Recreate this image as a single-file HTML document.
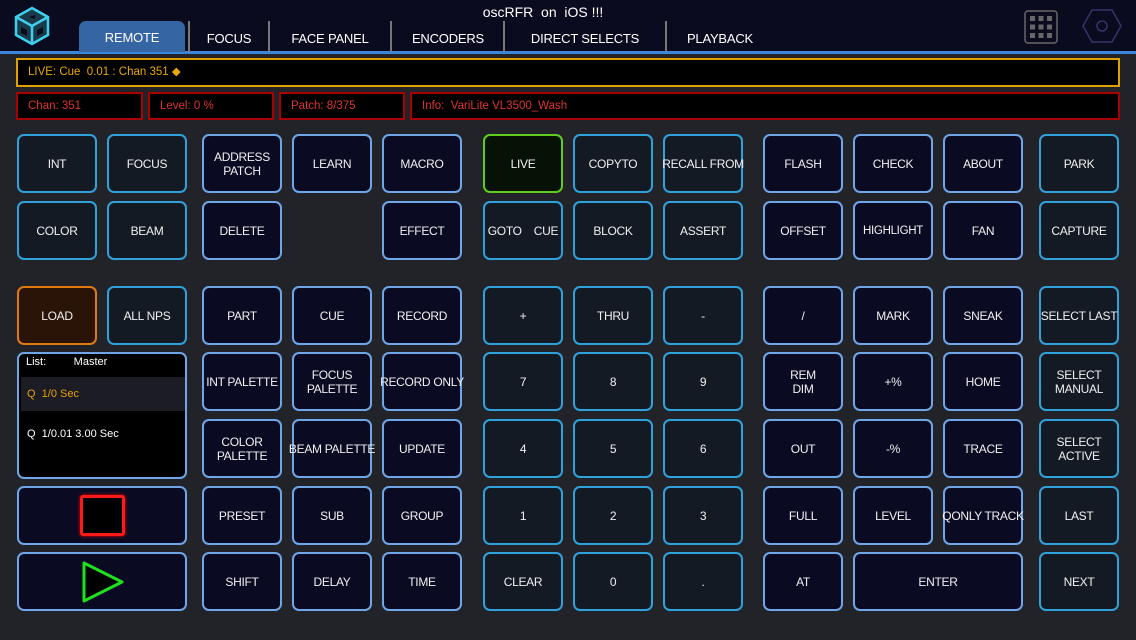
<!DOCTYPE html>
<html><head><meta charset="utf-8"><style>
*{margin:0;padding:0;box-sizing:border-box}
body{width:1136px;height:640px;background:#222229;font-family:"Liberation Sans",sans-serif;position:relative;overflow:hidden;color:#fff}
.top{position:absolute;left:0;top:0;width:1136px;height:52px;background:#0b0b20}
.line{position:absolute;left:0;top:51px;width:1136px;height:3px;background:#3a86d8}
.title{position:absolute;left:0;width:1086px;top:4px;text-align:center;font-size:14px;color:#fff}
.tab{position:absolute;top:22px;height:30px;line-height:34px;font-size:13px;letter-spacing:-0.2px;text-align:center;color:#fff}
.div{position:absolute;top:21px;width:2px;height:31px;background:#777}
.b{position:absolute;width:80px;height:59px;border-radius:7px;border:2px solid #6ea6e8;background:#0a0b22;display:flex;align-items:center;justify-content:center;text-align:center;font-size:12px;line-height:14px;color:#f0f0f0;white-space:nowrap;letter-spacing:-0.3px}
.t{border-color:#2fa2dc;background:#141a24}
.box{position:absolute;height:28px;border:2px solid #a00;background:#000;color:#d33;font-size:11.5px;line-height:24px;padding-left:10px}
</style></head><body>
<div class="top"></div>
<div class="line"></div>
<svg style="position:absolute;left:13px;top:6px" width="38" height="40" viewBox="0 0 38 40">
<polygon points="19,2 35,11 35,29 19,38 3,29 3,11" fill="#1a3a4a" stroke="#3fd0f0" stroke-width="2.5"/>
<polyline points="3,11 19,20 35,11" fill="none" stroke="#3fd0f0" stroke-width="2.5"/>
<line x1="19" y1="20" x2="19" y2="38" stroke="#3fd0f0" stroke-width="2.5"/>
<polygon points="8,21 14,24 14,30 8,27" fill="#0b0b20"/><polygon points="30,21 24,24 24,30 30,27" fill="#0b0b20"/>
<polygon points="16,11 22,9 22,13" fill="#0b0b20"/>
</svg>
<div class="title">oscRFR &nbsp;on &nbsp;iOS !!!</div>
<div class="tab" style="left:79px;width:106px;background:#3565a3;border-radius:7px 7px 0 0;top:21px;height:31px">REMOTE</div>
<div class="div" style="left:188px"></div>
<div class="tab" style="left:190px;width:78px">FOCUS</div>
<div class="div" style="left:268px"></div>
<div class="tab" style="left:270px;width:120px">FACE PANEL</div>
<div class="div" style="left:390px"></div>
<div class="tab" style="left:392px;width:112px">ENCODERS</div>
<div class="div" style="left:503px"></div>
<div class="tab" style="left:505px;width:160px">DIRECT SELECTS</div>
<div class="div" style="left:665px"></div>
<div class="tab" style="left:667px;width:106px">PLAYBACK</div>
<svg style="position:absolute;left:1024px;top:10px" width="34" height="34" viewBox="0 0 34 34">
<rect x="1" y="1" width="32" height="32" rx="3" fill="none" stroke="#666" stroke-width="1.5"/>
<g fill="#666"><rect x="6" y="6" width="5" height="5"/><rect x="14.5" y="6" width="5" height="5"/><rect x="23" y="6" width="5" height="5"/><rect x="6" y="14.5" width="5" height="5"/><rect x="14.5" y="14.5" width="5" height="5"/><rect x="23" y="14.5" width="5" height="5"/><rect x="6" y="23" width="5" height="5"/><rect x="14.5" y="23" width="5" height="5"/><rect x="23" y="23" width="5" height="5"/></g></svg>
<svg style="position:absolute;left:1082px;top:8px" width="40" height="36" viewBox="0 0 40 36">
<polygon points="10,2 30,2 39,18 30,34 10,34 1,18" fill="none" stroke="#34346a" stroke-width="1.5"/>
<circle cx="20" cy="18" r="5" fill="none" stroke="#34346a" stroke-width="1.5"/></svg>

<div style="position:absolute;left:16px;top:58px;width:1104px;height:29px;border:2px solid #e0a000;background:#000;color:#e8a800;font-size:11.5px;line-height:25px;padding-left:10px">LIVE: Cue &nbsp;0.01 : Chan 351 ◆</div>
<div class="box" style="left:16px;top:92px;width:127px">Chan: 351</div>
<div class="box" style="left:148px;top:92px;width:126px">Level: 0 %</div>
<div class="box" style="left:279px;top:92px;width:126px">Patch: 8/375</div>
<div class="box" style="left:410px;top:92px;width:710px">Info: &nbsp;VariLite VL3500_Wash</div>

<div class="b t" style="left:17px;top:134px">INT</div>
<div class="b t" style="left:107px;top:134px">FOCUS</div>
<div class="b" style="left:202px;top:134px">ADDRESS<br>PATCH</div>
<div class="b" style="left:292px;top:134px">LEARN</div>
<div class="b" style="left:382px;top:134px">MACRO</div>
<div class="b t" style="left:483px;top:134px;border-color:#5fcc1f;background:#061206">LIVE</div>
<div class="b t" style="left:573px;top:134px">COPYTO</div>
<div class="b t" style="left:663px;top:134px">RECALL FROM</div>
<div class="b" style="left:763px;top:134px">FLASH</div>
<div class="b" style="left:853px;top:134px">CHECK</div>
<div class="b" style="left:943px;top:134px">ABOUT</div>
<div class="b t" style="left:1039px;top:134px">PARK</div>

<div class="b t" style="left:17px;top:201px">COLOR</div>
<div class="b t" style="left:107px;top:201px">BEAM</div>
<div class="b" style="left:202px;top:201px">DELETE</div>
<div class="b" style="left:382px;top:201px">EFFECT</div>
<div class="b t" style="left:483px;top:201px">GOTO &nbsp;&nbsp;&nbsp;CUE</div>
<div class="b t" style="left:573px;top:201px">BLOCK</div>
<div class="b t" style="left:663px;top:201px">ASSERT</div>
<div class="b" style="left:763px;top:201px">OFFSET</div>
<div class="b" style="left:853px;top:201px;font-size:11.5px">HIGHLIGHT</div>
<div class="b" style="left:943px;top:201px">FAN</div>
<div class="b t" style="left:1039px;top:201px">CAPTURE</div>

<div class="b" style="left:17px;top:286px;border-color:#e07a10;background:#2a1408">LOAD</div>
<div class="b t" style="left:107px;top:286px">ALL NPS</div>
<div class="b" style="left:202px;top:286px">PART</div>
<div class="b" style="left:292px;top:286px">CUE</div>
<div class="b" style="left:382px;top:286px">RECORD</div>
<div class="b t" style="left:483px;top:286px">+</div>
<div class="b t" style="left:573px;top:286px">THRU</div>
<div class="b t" style="left:663px;top:286px">-</div>
<div class="b" style="left:763px;top:286px">/</div>
<div class="b" style="left:853px;top:286px">MARK</div>
<div class="b" style="left:943px;top:286px">SNEAK</div>
<div class="b t" style="left:1039px;top:286px">SELECT LAST</div>

<div style="position:absolute;left:17px;top:352px;width:170px;height:127px;border:2px solid #6ea6e8;border-radius:7px;background:#000;overflow:hidden;font-size:11px">
<div style="position:absolute;left:7px;top:2px">List: &nbsp;&nbsp;&nbsp;&nbsp;&nbsp;&nbsp;&nbsp;&nbsp;Master</div>
<div style="position:absolute;left:2px;top:23px;width:164px;height:34px;background:#1c1c24;color:#e8a000;line-height:34px;padding-left:6px">Q &nbsp;1/0 Sec</div>
<div style="position:absolute;left:8px;top:74px">Q &nbsp;1/0.01 3.00 Sec</div>
</div>

<div class="b" style="left:202px;top:352px">INT PALETTE</div>
<div class="b" style="left:292px;top:352px">FOCUS<br>PALETTE</div>
<div class="b" style="left:382px;top:352px">RECORD ONLY</div>
<div class="b t" style="left:483px;top:352px">7</div>
<div class="b t" style="left:573px;top:352px">8</div>
<div class="b t" style="left:663px;top:352px">9</div>
<div class="b" style="left:763px;top:352px">REM<br>DIM</div>
<div class="b" style="left:853px;top:352px">+%</div>
<div class="b" style="left:943px;top:352px">HOME</div>
<div class="b t" style="left:1039px;top:352px">SELECT<br>MANUAL</div>

<div class="b" style="left:202px;top:419px">COLOR<br>PALETTE</div>
<div class="b" style="left:292px;top:419px">BEAM PALETTE</div>
<div class="b" style="left:382px;top:419px">UPDATE</div>
<div class="b t" style="left:483px;top:419px">4</div>
<div class="b t" style="left:573px;top:419px">5</div>
<div class="b t" style="left:663px;top:419px">6</div>
<div class="b" style="left:763px;top:419px">OUT</div>
<div class="b" style="left:853px;top:419px">-%</div>
<div class="b" style="left:943px;top:419px">TRACE</div>
<div class="b t" style="left:1039px;top:419px">SELECT<br>ACTIVE</div>

<div class="b" style="left:17px;top:486px;width:170px"><div style="width:45px;height:41px;border:3px solid #ff1a1a;border-radius:3px;background:#000;box-shadow:0 0 3px #f00"></div></div>
<div class="b" style="left:202px;top:486px">PRESET</div>
<div class="b" style="left:292px;top:486px">SUB</div>
<div class="b" style="left:382px;top:486px">GROUP</div>
<div class="b t" style="left:483px;top:486px">1</div>
<div class="b t" style="left:573px;top:486px">2</div>
<div class="b t" style="left:663px;top:486px">3</div>
<div class="b" style="left:763px;top:486px">FULL</div>
<div class="b" style="left:853px;top:486px">LEVEL</div>
<div class="b" style="left:943px;top:486px">QONLY TRACK</div>
<div class="b t" style="left:1039px;top:486px">LAST</div>

<div class="b" style="left:17px;top:552px;width:170px"><svg width="48" height="48" viewBox="0 0 48 48"><path d="M6,5 L44,24 L6,43 Z" fill="#000" stroke="#1ee01e" stroke-width="3" stroke-linejoin="round"/></svg></div>
<div class="b" style="left:202px;top:552px">SHIFT</div>
<div class="b" style="left:292px;top:552px">DELAY</div>
<div class="b" style="left:382px;top:552px">TIME</div>
<div class="b t" style="left:483px;top:552px">CLEAR</div>
<div class="b t" style="left:573px;top:552px">0</div>
<div class="b t" style="left:663px;top:552px">.</div>
<div class="b" style="left:763px;top:552px">AT</div>
<div class="b" style="left:853px;top:552px;width:170px">ENTER</div>
<div class="b t" style="left:1039px;top:552px">NEXT</div>
</body></html>
